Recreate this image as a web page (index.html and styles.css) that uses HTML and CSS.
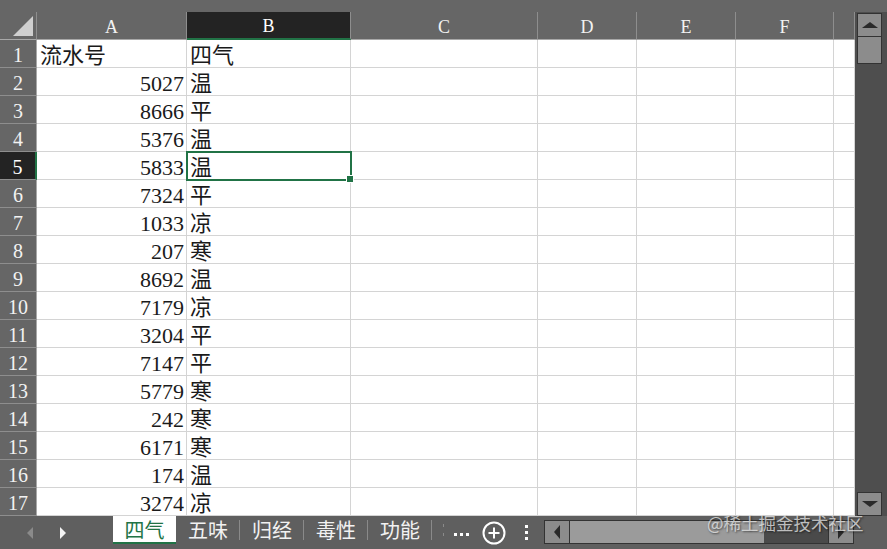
FILE: index.html
```html
<!DOCTYPE html>
<html lang="zh">
<head>
  <meta charset="UTF-8">
  <title>四气 - Excel</title>
  <link rel="stylesheet" href="styles.css">
</head>
<body>
  <div class="app">
    <div class="top-band"></div>
    <div class="main">
      <div class="sheet" id="sheet"></div>
      <div class="vscroll">
        <div class="sb-btn"><span class="tri-up"></span></div>
        <div class="sb-thumb"></div>
        <div class="sb-track"></div>
        <div class="sb-btn"><span class="tri-down"></span></div>
      </div>
    </div>
    <div class="bottom-bar">
      <div class="tab-nav">
        <span class="nav-arrow left disabled"></span>
        <span class="nav-arrow right"></span>
      </div>
      <div class="tabs">
        <div class="tab active">四气</div>
        <div class="tab">五味</div>
        <div class="tab">归经</div>
        <div class="tab">毒性</div>
        <div class="tab">功能</div>
        <div class="tab clipped"><i></i><i></i></div>
      </div>
      <div class="tab-tools">
        <span class="more-dots"><i></i><i></i><i></i></span>
        <svg class="add-sheet" width="24" height="24" viewBox="0 0 24 24">
          <circle cx="12" cy="12" r="10.5" fill="none" stroke="#fff" stroke-width="2"/>
          <path d="M12 6.5v11M6.5 12h11" stroke="#fff" stroke-width="2"/>
        </svg>
        <span class="vdots"><i></i><i></i><i></i></span>
      </div>
      <div class="hscroll">
        <div class="hs-btn"><span class="tri-left"></span></div>
        <div class="hs-thumb"></div>
        <div class="hs-track"></div>
        <div class="hs-btn"><span class="tri-right"></span></div>
      </div>
    </div>
    <div class="watermark">@稀土掘金技术社区</div>
  </div>

  <script>
    const cols = ['A', 'B', 'C', 'D', 'E', 'F', ''];
    const rows = [
      ['流水号', '四气'],
      [5027, '温'], [8666, '平'], [5376, '温'], [5833, '温'],
      [7324, '平'], [1033, '凉'], [207, '寒'], [8692, '温'],
      [7179, '凉'], [3204, '平'], [7147, '平'], [5779, '寒'],
      [242, '寒'], [6171, '寒'], [174, '温'], [3274, '凉']
    ];
    const selCol = 'B';
    const selRow = 5;

    function buildSheet() {
      let html = '<div class="corner"><svg width="37" height="28"><path d="M33 4L33 24L13 24Z" fill="#cfcfcf"/></svg></div>';
      cols.forEach(c => {
        html += `<div class="col-head${c === selCol ? ' selected' : ''}">${c}</div>`;
      });
      rows.forEach((r, i) => {
        const n = i + 1;
        html += `<div class="row-head${n === selRow ? ' selected' : ''}">${n}</div>`;
        const a = r[0];
        html += `<div class="cell${typeof a === 'number' ? ' num' : ''}">${a}</div>`;
        html += `<div class="cell${n === selRow ? ' active' : ''}">${r[1]}</div>`;
        for (let k = 2; k < cols.length; k++) html += '<div class="cell"></div>';
      });
      document.getElementById('sheet').innerHTML = html;
    }

    buildSheet();
  </script>
</body>
</html>
```

FILE: styles.css
```css
body {
  margin: 0;
  background: #666;
  font-family: "Liberation Serif", "Noto Sans CJK SC", serif;
}

.app {
  width: 887px;
  height: 549px;
  display: flex;
  flex-direction: column;
  position: relative;
  overflow: hidden;
  background: #666;
}

.top-band {
  height: 12px;
  background: #666;
}

.main {
  display: flex;
  height: 504px;
}

/* grid */
.sheet {
  width: 855px;
  display: grid;
  grid-template-columns: 37px 150px 164px 187px 99px 99px 98px 21px;
  grid-auto-rows: 28px;
  background: #fff;
  overflow: hidden;
}

.corner,
.col-head {
  background: #666;
  border-bottom: 1px solid #a8a8a8;
  box-sizing: border-box;
}
.corner {
  border-right: 1px solid #8e8e8e;
}
.col-head {
  color: #f2f2f2;
  font-size: 18px;
  text-align: center;
  line-height: 30px;
  border-right: 1px solid #8e8e8e;
}
.col-head:last-child {
  border-right: none;
}
.col-head.selected {
  background: #232323;
  color: #fff;
  border-bottom: 2px solid #217346;
  line-height: 29px;
}

.row-head {
  background: #666;
  color: #f2f2f2;
  font-size: 20px;
  text-align: center;
  line-height: 30px;
  border-right: 1px solid #a8a8a8;
  border-bottom: 1px solid #8e8e8e;
  box-sizing: border-box;
  overflow: hidden;
}
.row-head.selected {
  background: #232323;
  color: #fff;
  border-right: 2px solid #217346;
}

.cell {
  box-sizing: border-box;
  border-right: 1px solid #d4d4d4;
  border-bottom: 1px solid #d4d4d4;
  font-size: 22px;
  line-height: 31px;
  color: #1a1a1a;
  padding: 0 4px 0 3px;
  white-space: nowrap;
}
.cell.num {
  text-align: right;
  padding-right: 2px;
}
.cell.active {
  position: relative;
  outline: 2px solid #217346;
  outline-offset: -1px;
  z-index: 1;
}
.cell.active::after {
  content: "";
  position: absolute;
  right: -4px;
  bottom: -4px;
  width: 6px;
  height: 6px;
  background: #217346;
  border: 1px solid #fff;
}

/* vertical scrollbar */
.vscroll {
  width: 32px;
  display: flex;
  flex-direction: column;
  padding: 1px 5px 0 2px;
  box-sizing: border-box;
  background: #4e4e4e;
}
.sb-btn,
.sb-thumb {
  height: 24px;
  background: #8c8c8c;
  border: 1px solid #333;
  box-sizing: border-box;
  display: flex;
  align-items: center;
  justify-content: center;
}
.sb-thumb {
  height: 27px;
  border-top: none;
}
.sb-track {
  flex: 1;
}
.tri-up,
.tri-down {
  width: 0;
  height: 0;
  border-left: 8px solid transparent;
  border-right: 8px solid transparent;
}
.tri-up {
  border-bottom: 6px solid #2a2a2a;
}
.tri-down {
  border-top: 6px solid #2a2a2a;
}

/* sheet tabs */
.bottom-bar {
  height: 33px;
  display: flex;
  align-items: flex-start;
  background: #5f5f5f;
}
.tab-nav {
  width: 113px;
  height: 33px;
  display: flex;
  align-items: center;
  padding-left: 27px;
  gap: 27px;
  box-sizing: border-box;
}
.nav-arrow {
  width: 0;
  height: 0;
  border-top: 6px solid transparent;
  border-bottom: 6px solid transparent;
}
.nav-arrow.left {
  border-right: 6px solid #8a8a8a;
}
.nav-arrow.right {
  border-left: 6px solid #f4f4f4;
}

.tabs {
  display: flex;
}
.tab {
  width: 64px;
  height: 28px;
  box-sizing: border-box;
  font-family: "Noto Sans CJK SC", sans-serif;
  font-size: 20px;
  line-height: 28px;
  color: #f2f2f2;
  text-align: center;
  position: relative;
}
.tab::after {
  content: "";
  position: absolute;
  right: 0;
  top: 4px;
  height: 20px;
  border-right: 1px solid #8a8a8a;
}
.tab.active {
  width: 63px;
  background: #fff;
  color: #217346;
  border-bottom: 2px solid #217346;
  line-height: 27px;
}
.tab.active::after,
.tab.clipped::after {
  display: none;
}
.tab.clipped {
  width: 12px;
  display: flex;
  flex-direction: column;
  justify-content: center;
  align-items: flex-end;
  gap: 6px;
}
.tab.clipped i {
  display: block;
  width: 1px;
  height: 3px;
  background: #8a8a8a;
}

.tab-tools {
  width: 100px;
  height: 33px;
  display: flex;
  align-items: center;
  padding-left: 10px;
  box-sizing: border-box;
}
.more-dots {
  display: flex;
  gap: 3px;
  margin-top: 3px;
}
.more-dots i,
.vdots i {
  display: block;
  width: 3px;
  height: 3px;
  background: #fff;
}
.add-sheet {
  margin-left: 13px;
}
.vdots {
  display: flex;
  flex-direction: column;
  gap: 3px;
  margin-left: 19px;
}

/* horizontal scrollbar */
.hscroll {
  width: 310px;
  height: 24px;
  margin-top: 4px;
  display: flex;
  border: 1px solid #333;
  box-sizing: border-box;
  background: #4a4a4a;
}
.hs-btn {
  width: 24px;
  background: #8c8c8c;
  display: flex;
  align-items: center;
  justify-content: center;
}
.hs-btn:first-child {
  border-right: 1px solid #333;
}
.hs-btn:last-child {
  border-left: 1px solid #333;
}
.hs-thumb {
  width: 194px;
  background: #9b9b9b;
}
.hs-track {
  flex: 1;
}
.tri-left,
.tri-right {
  width: 0;
  height: 0;
  border-top: 7px solid transparent;
  border-bottom: 7px solid transparent;
}
.tri-left {
  border-right: 6px solid #2a2a2a;
}
.tri-right {
  border-left: 6px solid #2a2a2a;
}

.watermark {
  position: absolute;
  left: 707px;
  top: 510px;
  font-family: "Noto Sans CJK SC", sans-serif;
  font-size: 17.5px;
  color: rgba(235, 235, 235, 0.75);
  text-shadow: 1px 1px 2px rgba(0, 0, 0, 0.55);
  white-space: nowrap;
  pointer-events: none;
}
```
